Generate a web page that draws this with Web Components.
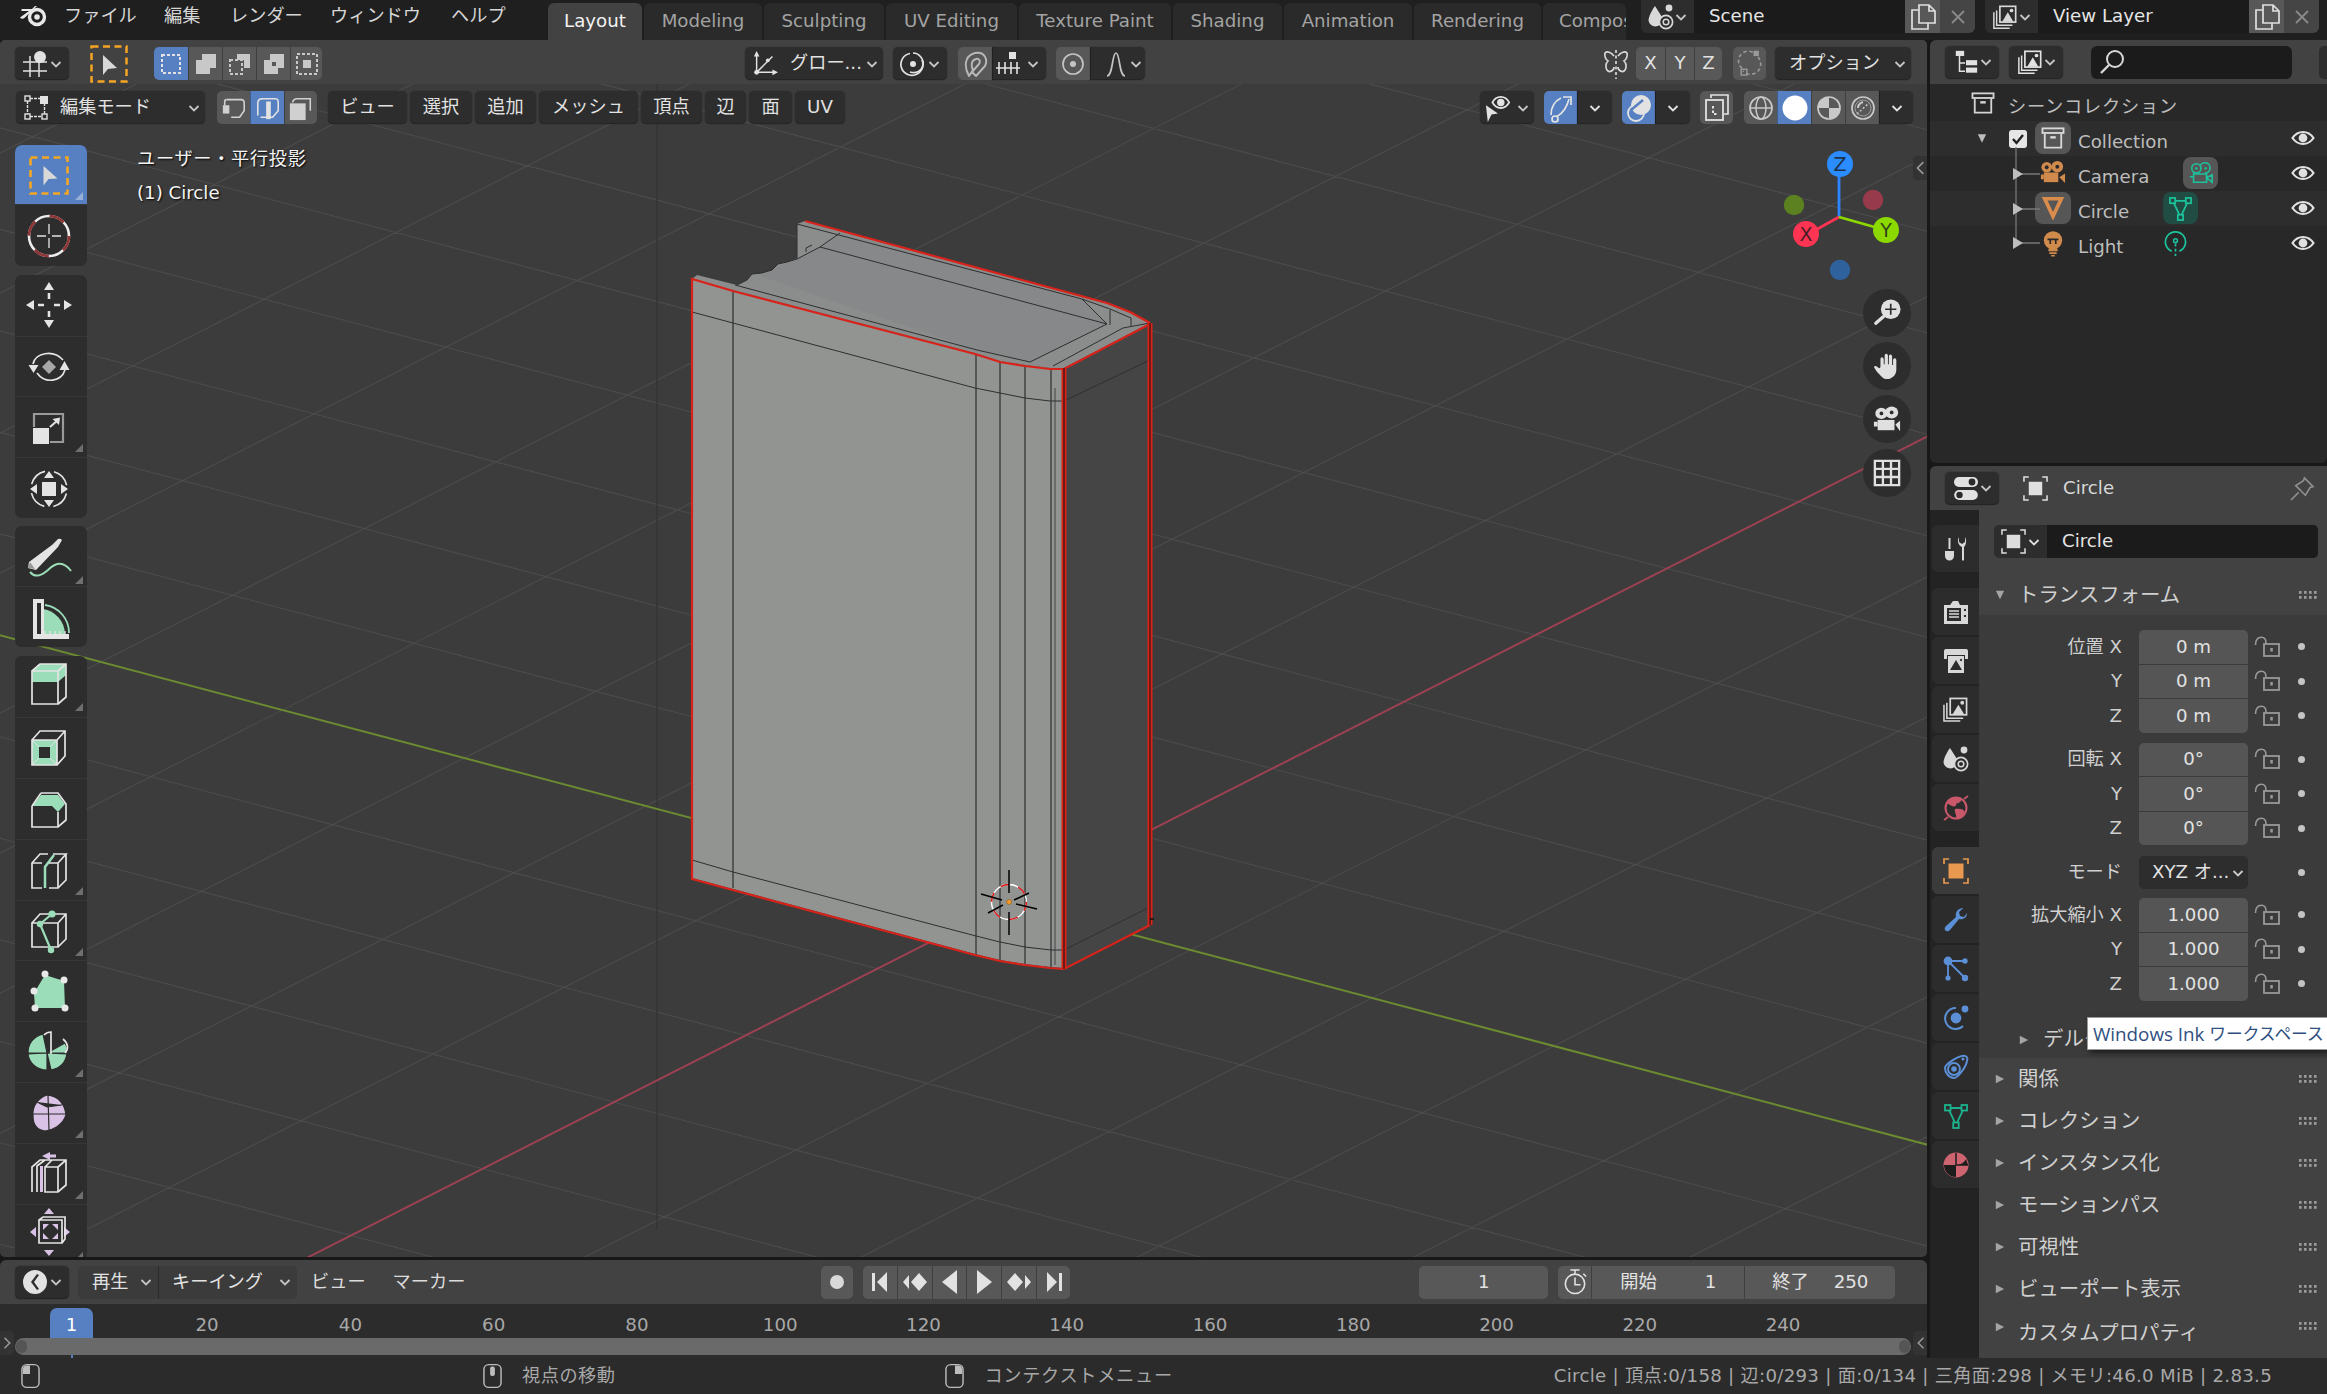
<!doctype html>
<html lang="ja"><head><meta charset="utf-8"><title>Blender</title>
<style>html,body{margin:0;width:2327px;height:1394px;background:#181818;overflow:hidden}</style>
</head><body><bl-app></bl-app>
<script>
const FONT='"DejaVu Sans","Noto Sans CJK JP",sans-serif';
const F='fill="currentColor" stroke="none"';
const D='stroke-dasharray="3 2"';
const ICONS={
chev:['0 0 12 12','<path stroke-width="1.8" d="M1.5 4 6 8.5 10.5 4"/>'],
logo:['0 0 30 28',`<circle cx="19" cy="15" r="7.5" stroke-width="3.4"/><circle cx="19" cy="15" r="2.8" ${F}/><path ${F} d="M2 15.5 11 9 H3.5 V7 H14 L17 4 19 4 13 9.5 7 15.5Q4 18 2 15.5Z"/>`],
orient:['0 0 28 28',`<path stroke-width="1.5" d="M1 12H25M1 21H25M8 6V27M17 12V27"/><circle cx="18" cy="7" r="6" ${F}/>`],
selbox:['0 0 38 38','<rect x="1.5" y="1.5" width="35" height="35" stroke="#f5a623" stroke-width="2.5" stroke-dasharray="7 4.5"/><path fill="#d8d8d8" stroke="none" d="M13 10 27 23 18 24 13 30Z"/>'],
m1:['0 0 26 26',`<rect x="4" y="4" width="18" height="18" stroke-width="2" ${D}/>`],
m2:['0 0 26 26',`<path ${F} d="M9 3H23V17H17V23H3V9H9Z"/>`],
m3:['0 0 26 26',`<path ${F} d="M10 3H23V17H17V9H10Z"/><path stroke-width="2" ${D} d="M3 9H15V23H3Z"/>`],
m4:['0 0 26 26',`<path ${F} fill-rule="evenodd" d="M9 3H23V17H17V23H3V9H9ZM11 11V15H15V11Z"/>`],
m5:['0 0 26 26',`<rect x="3" y="3" width="20" height="20" stroke-width="2" ${D}/><rect x="9" y="9" width="8" height="8" ${F}/>`],
torient:['0 0 28 28',`<path stroke-width="1.6" d="M5 4V23H25M5 23 22 6"/><path ${F} d="M5 0 8 6H2ZM28 23 22 20V26Z"/><circle cx="5" cy="23" r="2.6" ${F}/><circle cx="17" cy="10" r="2" ${F}/>`],
pivot:['0 0 26 28',`<path stroke-width="1.7" d="M10 3.500A11 11 0 1 0 22 10"/><path stroke-width="1.7" d="M13 3C19 3 24 9 23 15 22 21 16 24 10 22"/><circle cx="13" cy="14" r="3" ${F}/>`],
magnet:['0 0 26 28','<path stroke-width="1.900" stroke-linejoin="round" d="M7 26C2 17 2 6 13 3 23 1 26 10 23 16L14 26 10 22 17 14C19 11 17 8 14 9 9 10 9 16 11 20Z"/>'],
snapinc:['0 0 26 26',`<rect x="14" y="1" width="7" height="7" ${F}/><path stroke-width="1.6" d="M1 17H25M4 11V23M10 11V23M16 11V23M22 11V23"/>`],
propc:['0 0 26 26',`<circle cx="13" cy="13" r="10" stroke-width="1.7"/><circle cx="13" cy="13" r="3" ${F}/>`],
falloff:['0 0 26 26','<path stroke-width="1.7" d="M4 25C10 25 9 2 13 2S16 25 22 25"/>'],
mirror:['0 0 26 30',`<path stroke-width="1.7" d="M11 7C8 3 4 2 2 4c-1 3 1 7 3 8-2 2-3 6-1 9s7 1 7-3M15 7c3-4 7-5 9-3 1 3-1 7-3 8 2 2 3 6 1 9s-7 1-7-3"/><path stroke-width="1.7" stroke-dasharray="3 2.5" d="M13 1V30"/>`],
automerge:['0 0 30 34',`<path stroke-width="1.8" stroke-dasharray="4 3" d="M24 9A11 11 0 0 1 7 25"/><path stroke-width="1.8" stroke-dasharray="4 3" d="M6 22A11 11 0 0 1 20 5"/><rect x="19" y="2" width="6" height="6" ${F}/><rect x="5" y="23" width="6.5" height="6.5" stroke-width="1.6"/>`],
tree:['0 0 28 28',`<rect x="3" y="2" width="9" height="5.5" ${F}/><path stroke-width="1.6" d="M7 7V24H13M7 15H13"/><rect x="14" y="12" width="12" height="5.5" ${F}/><rect x="14" y="20" width="12" height="5.5" ${F}/>`],
layers:['0 0 28 26',`<path stroke-width="1.6" d="M2 8V25H19M5 6V22H22"/><rect x="8.5" y="1.5" width="17" height="17" stroke-width="1.8"/><path ${F} d="M11 18 17 8 23 18Z"/><circle cx="21" cy="6" r="2" ${F}/>`],
search:['0 0 26 26','<circle cx="16" cy="10" r="8" stroke-width="2"/><path stroke-width="2.4" d="M10 16 2 24"/>'],
coll:['0 0 26 24',`<rect x="1.5" y="1.5" width="23" height="5" stroke-width="2"/><path stroke-width="2" d="M4 7V22.5H22V7"/><rect x="10" y="10" width="6" height="2.6" ${F}/>`],
cam:['0 0 28 24',`<circle cx="8" cy="6.5" r="5.5" ${F}/><circle cx="19" cy="6" r="6" ${F}/><rect x="5" y="12" width="15" height="10" ${F}/><path ${F} d="M21 17 27 13V23ZM2 14H5V19H2Z"/><circle cx="8" cy="6.5" r="2" fill="#2a2a2a" stroke="none"/><circle cx="19" cy="6" r="2" fill="#2a2a2a" stroke="none"/>`],
camo:['0 0 28 24','<circle cx="9" cy="7" r="5" stroke-width="1.7"/><path stroke-width="1.7" d="M13 5a5.5 5.5 0 1 1 5 7M6 13H20V22H6ZM20 17 26 14V22ZM2 16H6"/><circle cx="9" cy="7" r="1" fill="currentColor"/><circle cx="19" cy="7" r="1" fill="currentColor"/>'],
tri:['0 0 26 26','<path stroke-width="4" stroke-linejoin="miter" d="M4 3H22L13 22Z"/>'],
bulb:['0 0 24 28',`<circle cx="12" cy="10" r="10" ${F}/><rect x="7" y="19" width="10" height="3" ${F}/><rect x="8" y="23" width="8" height="2" ${F}/><rect x="10" y="26" width="4" height="1.6" ${F}/><path stroke="#2a2a2a" stroke-width="1.8" d="M6 9H18M9 9V14M15 9V14"/>`],
meshd:['0 0 26 26',`<path stroke-width="1.8" d="M5 5H21L13 22Z"/><rect x="2" y="2" width="5.5" height="5.5" stroke-width="1.8" fill="var(--bgc,transparent)"/><rect x="18.5" y="2" width="5.5" height="5.5" stroke-width="1.8" fill="var(--bgc,transparent)"/><rect x="10.2" y="19.5" width="5.5" height="5.5" stroke-width="1.8" fill="var(--bgc,transparent)"/>`],
lightd:['0 0 24 28',`<path stroke-width="1.8" d="M8 22A10.5 10.5 0 1 1 16 22"/><circle cx="12" cy="11" r="2" stroke-width="1.6"/><path stroke-width="1.8" stroke-dasharray="3 2.4" d="M12 14V27"/>`],
eye:['0 0 24 18',`<path stroke-width="2.2" d="M1.5 9C7 1 17 1 22.5 9 17 17 7 17 1.5 9Z"/><circle cx="12" cy="9" r="4.4" ${F}/>`],
editor:['0 0 26 26',`<rect x="1" y="2" width="24" height="10" rx="5" ${F}/><rect x="1.2" y="15" width="23.6" height="10" rx="5" stroke-width="1.4" ${F}/><circle cx="19" cy="7" r="3.4" fill="#2b2b2b" stroke="none"/><circle cx="6.5" cy="20" r="3.2" fill="#2b2b2b" stroke="none"/>`],
obj:['0 0 26 26',`<path stroke-width="1.6" d="M1 6V1H6M20 1H25V6M25 20V25H20M6 25H1V20"/><rect x="6" y="6" width="14" height="14" ${F}/>`],
pin:['0 0 26 26',`<path stroke-width="1.7" d="M1 25 9 17M15 2 24 11 21 12 16 20 6 10 14 5Z"/>`],
tool:['0 0 26 26',`<path ${F} d="M2 15H11V20A4.5 4.5 0 0 1 2 20ZM5.5 2H7.5V13H5.5ZM19 11C15 9 14 5 16 1V6L19 8 22 6V1C24 5 23 9 21 11V24Q20 25.5 19 24Z"/>`],
render:['0 0 26 26',`<path ${F} fill-rule="evenodd" d="M1 6H7L10 2H15L17 6H25V25H1ZM4 9V22H18V9Z"/><path stroke-width="1.4" d="M6 12H16M6 15H16M6 18H16"/><circle cx="22" cy="11" r="1.7" fill="#2c2c2c"/><circle cx="22" cy="17" r="1.7" fill="#2c2c2c"/>`],
output:['0 0 26 26',`<path ${F} d="M1 3Q1 1 3 1H23Q25 1 25 3V11H22V7H4V11H1Z"/><rect x="5" y="8" width="16" height="17" ${F}/><path fill="#2c2c2c" stroke="none" d="M7 22 13 12 19 22Z"/><circle cx="18" cy="12" r="1.6" fill="#2c2c2c"/>`],
scenet:['0 0 26 26',`<path ${F} d="M7 2 14 13C12 15 11 18 11.5 21 8 24 1 22 0.5 16 1 12 4 6 7 2Z"/><circle cx="21" cy="4" r="3.4" ${F}/><circle cx="18" cy="18" r="6.6" stroke-width="1.7"/><circle cx="18" cy="18" r="2.8" stroke-width="1.5"/>`],
world:['0 0 26 26',`<circle cx="13" cy="13" r="10.5" stroke-width="2"/><path ${F} d="M5 5C8 2 15 1 18 4 19 7 15 8 13 9 14 11 11 12 9 11 7 10 5 9 4 8ZM12 14C16 13 21 14 22 17 20 21 16 24 13 23 14 20 11 17 12 14Z"/><path stroke-width="1.7" d="M1 25 5 22M25 1 21 4"/>`],
objt:['0 0 26 26',`<path stroke-width="1.7" d="M1 6V1H6M20 1H25V6M25 20V25H20M6 25H1V20"/><rect x="5.5" y="5.5" width="15" height="15" ${F}/>`],
wrench:['0 0 26 26',`<path ${F} d="M24 6C24 11 20 13 16 12L7 23C4 26 0 23 2.5 19.5L13 10C12 5 15 1 20.500 1L16 5 17 9 21 10Z"/>`],
part:['0 0 26 26',`<circle cx="5" cy="5" r="4.4" ${F}/><circle cx="22" cy="5" r="2.7" ${F}/><circle cx="5" cy="22" r="2.6" ${F}/><circle cx="22" cy="22" r="3.2" ${F}/><path stroke-width="1.8" d="M5 5H22M5 5V22M5 5 22 22"/>`],
phys:['0 0 26 26',`<path stroke-width="2" d="M20 21A10.500 10.500 0 1 1 13 3"/><circle cx="13" cy="13" r="5.4" ${F}/><circle cx="22" cy="4" r="3.4" ${F}/>`],
constr:['0 0 26 26',`<path stroke-width="2" d="M2 14C2 10 14 3 19 2 24 1 25 4 24 7 23 13 15 24 11 24 6 24 2 19 2 14Z"/><circle cx="11" cy="15" r="6" stroke-width="2"/><circle cx="11" cy="15" r="2.8" ${F}/><circle cx="20" cy="5" r="1.6" ${F}/>`],
mat:['0 0 26 26',`<circle cx="13" cy="13" r="12.500" ${F}/><path fill="#1d1d1d" stroke="none" d="M13 13H1A12 12 0 0 0 13 25Z"/><path stroke="#1d1d1d" stroke-width="1.500" d="M13 1V13H25"/><path fill="#1d1d1d" stroke="none" d="M13 13C17 13 21 11 23 7L25 13Z"/>`],
lock:['0 0 26 22',`<path stroke-width="1.6" d="M1.500 9C1.500 4 4 1.200 7.500 1.200 11 1.200 12 4 12 7"/><rect x="10" y="8" width="15" height="12" stroke-width="1.8"/><rect x="16.300" y="12" width="2.500" height="3.500" ${F}/>`],
grip:['0 0 18 9',`<g ${F}><rect x="0" y="0" width="2.600" height="2.800"/><rect x="5" y="0" width="2.600" height="2.800"/><rect x="10" y="0" width="2.600" height="2.800"/><rect x="15" y="0" width="2.600" height="2.800"/><rect x="0" y="5" width="2.600" height="2.800"/><rect x="5" y="5" width="2.600" height="2.800"/><rect x="10" y="5" width="2.600" height="2.800"/><rect x="15" y="5" width="2.600" height="2.800"/></g>`],
tdown:['0 0 12 10',`<path ${F} d="M1 0H11L6 10Z"/>`],
tright:['0 0 12 12',`<path ${F} d="M1 1 11 6 1 11Z"/>`],
tleft:['0 0 12 20',`<path stroke-width="2" d="M10 3 3 10 10 17"/>`],
tright2:['0 0 12 20',`<path stroke-width="2" d="M2 3 9 10 2 17"/>`],
emode:['0 0 26 26',`<rect x="1" y="1" width="5" height="5" stroke-width="1.4"/><rect x="16" y="1" width="8" height="8" ${F}/><rect x="1" y="19" width="5" height="5" stroke-width="1.4"/><rect x="18" y="19" width="5" height="5" stroke-width="1.4"/><path stroke-width="1.4" d="M3.500 6V19M6 21.500H18M20.500 19V9M6 3.500H16" stroke-dasharray="3 1"/>`],
vert:['0 0 28 28',`<path stroke-width="1.7" d="M6 5H22C25 5 25 7 25 9V17L20 24H11"/><rect x="2" y="11" width="7" height="9" ${F}/><path stroke-width="1.700" d="M4 11V7Q4 5 6 5"/>`],
edge:['0 0 28 28',`<path stroke-width="1.700" d="M3 22V9C3 6 5 4 8 4H22C25 4 25 6 25 9V17L19 24H6"/><rect x="12" y="7" width="5" height="19" ${F}/>`],
face:['0 0 28 28',`<path stroke-width="1.700" d="M5 8C5 6 7 4 10 4H24V17"/><rect x="2" y="9" width="17" height="18" ${F}/>`],
ovis:['0 0 28 30',`<path stroke-width="2" d="M8 9C12 1 22 1 26 9 22 17 12 17 8 9Z"/><circle cx="17" cy="9" r="4" ${F}/><path ${F} d="M1 12 14 21 7 22 3 30Z"/>`],
ogiz:['0 0 26 30',`<circle cx="7" cy="26" r="3" stroke-width="1.700"/><path stroke-width="1.700" d="M9 23.500C15 20 19 14 21 6"/><path stroke-width="1.700" d="M15 4H23V12"/><path stroke-width="1.700" d="M3 22C3 14 7 8 13 5"/>`],
oover:['0 0 26 30',`<circle cx="15" cy="12" r="10" ${F}/><circle cx="10" cy="20" r="8" stroke-width="1.800"/><path stroke="#5680c2" stroke-width="2.500" d="M5 17 17 7"/>`],
xray:['0 0 26 28',`<path stroke-width="1.700" d="M7 4V1H24V20H20"/><rect x="2" y="6" width="17" height="20" stroke-width="1.800"/><path stroke-width="2" stroke-dasharray="2.500 2" d="M9 12V20H14"/>`],
swire:['0 0 26 26',`<circle cx="13" cy="13" r="11" stroke-width="1.700"/><ellipse cx="13" cy="13" rx="5" ry="11" stroke-width="1.500"/><path stroke-width="1.500" d="M2 13H24"/>`],
ssolid:['0 0 26 26',`<circle cx="13" cy="13" r="12.500" ${F}/>`],
smat:['0 0 26 26',`<circle cx="13" cy="13" r="11" stroke-width="1.700"/><path ${F} d="M13 2A11 11 0 0 0 2 13H13ZM13 13H24A11 11 0 0 1 13 24Z"/><path stroke-width="1.500" stroke-dasharray="2.500 2" d="M14 22A8 8 0 0 0 22 15"/>`],
srend:['0 0 26 26',`<circle cx="13" cy="13" r="11" stroke-width="1.700"/><circle cx="13" cy="13" r="8" stroke-width="1" opacity=".6"/><path stroke-width="2" d="M8 13C8 10 10 8 13 7"/><path stroke-width="1.500" stroke-dasharray="2 2" d="M7 19 19 8"/>`],
tlclock:['0 0 26 26',`<path ${F} fill-rule="evenodd" d="M13 1A12 12 0 1 1 13 25 12 12 0 0 1 13 1ZM15 5 9 13 15 21 17 20 12 13 17 6Z"/>`],
jmpS:['0 0 26 26',`<path ${F} d="M5 4H8V22H5ZM20 3V23L10 13Z"/>`],
keyP:['0 0 26 26',`<path ${F} d="M1 13 7 6V20ZM17 4 25 13 17 22 9 13Z"/>`],
playB:['0 0 26 26',`<path ${F} d="M20 1V25L5 13Z"/>`],
play:['0 0 26 26',`<path ${F} d="M6 1V25L21 13Z"/>`],
keyN:['0 0 26 26',`<path ${F} d="M25 13 19 6V20ZM9 4 1 13 9 22 17 13Z"/>`],
jmpE:['0 0 26 26',`<path ${F} d="M21 4H18V22H21ZM6 3V23L16 13Z"/>`],
rec:['0 0 26 26',`<circle cx="13" cy="13" r="7" ${F}/>`],
timer:['0 0 26 30',`<circle cx="13" cy="17" r="10.500" stroke-width="1.700"/><path stroke-width="1.700" d="M8 2H18M13 2V6M22 6 25 9M13 10V18H19"/>`],
mouseL:['0 0 20 26',`<rect x="1" y="1" width="18" height="24" rx="5" stroke-width="1.500"/><path ${F} d="M2 11V6Q2 2 6 2H9.500V11Z"/>`],
mouseM:['0 0 20 26',`<rect x="1" y="1" width="18" height="24" rx="5" stroke-width="1.500"/><rect x="7.500" y="3" width="5" height="10" rx="2" ${F}/>`],
mouseR:['0 0 20 26',`<rect x="1" y="1" width="18" height="24" rx="5" stroke-width="1.500"/><path ${F} d="M18 11V6Q18 2 14 2H10.500V11Z"/>`],
nzoom:['0 0 30 30',`<circle cx="19" cy="11" r="10.500" ${F}/><path stroke="#2d2d2d" stroke-width="1.800" d="M19 5V17M13 11H25"/><path stroke-width="3.600" stroke-linecap="round" d="M11 19 3 26"/>`],
nhand:['0 0 30 30',`<path ${F} d="M7 24C4 21 2 18 1 16 2 14 4 15 6 17 7 18 8 17 8 15V8C8 5 11 5 11.500 8V13H12.500V4C12.500 1 16 1 16 4V13H17V5C17 2 20.500 2 20.500 5V14H21.500V9C21.500 6 25 6 25 9V19C25 25 20 29 15 29 11 29 9 26 7 24Z"/>`],
ncam:['0 0 30 30',`<ellipse cx="9" cy="9" rx="6.500" ry="6" ${F}/><ellipse cx="20" cy="8" rx="7" ry="6.500" ${F}/><rect x="5" y="16" width="18" height="11" ${F}/><path ${F} d="M24 21 29 17V28ZM1 18H5V23H1Z"/><circle cx="9" cy="9" r="2" fill="#2d2d2d" stroke="none"/><circle cx="20" cy="8" r="2" fill="#2d2d2d" stroke="none"/>`],
ngrid:['0 0 30 30',`<path stroke-width="2.500" d="M2 2H28V28H2ZM10.600 2V28M19.300 2V28M2 10.600H28M2 19.300H28"/>`],
};
function icon(name,w,h,extra=''){const [vb,body]=ICONS[name];
  return `<svg xmlns="http://www.w3.org/2000/svg" viewBox="${vb}" width="${w}" height="${h||w}" fill="none" stroke="currentColor" ${extra} style="display:block;flex:none">${body}</svg>`;}
class BlIcon extends HTMLElement{connectedCallback(){if(this.shadowRoot)return;
  const w=this.getAttribute('w')||26,h=this.getAttribute('h')||w;
  this.attachShadow({mode:'open'}).innerHTML=`<style>:host{display:inline-flex;flex:none;align-items:center;justify-content:center;color:${this.getAttribute('c')||'inherit'}}</style>${icon(this.getAttribute('name'),w,h)}`;}}
customElements.define('bl-icon',BlIcon);

class BlBtn extends HTMLElement{connectedCallback(){if(this.shadowRoot)return;
  const tone=this.getAttribute('tone')||'dark',r=this.getAttribute('r')||'all',w=this.getAttribute('w');
  const bg={dark:'#2d2d2d',gray:'#585858',blue:'#5680c2',none:'transparent',line:'#3b3b3b',field:'#545454'}[tone];
  const rad={all:'5px',l:'5px 0 0 5px',r:'0 5px 5px 0',m:'0'}[r];
  const ic=this.getAttribute('icon'),chev=this.hasAttribute('chev'),is=this.getAttribute('is')||26,jc=this.getAttribute('jc')||'center',col=this.getAttribute('c')||'#e2e2e2';
  this.attachShadow({mode:'open'}).innerHTML=`<style>:host{display:inline-flex;flex:none;align-items:center;justify-content:${jc};box-sizing:border-box;height:33px;${w?`width:${w}px;`:''}background:${bg};border-radius:${rad};color:${col};gap:${this.getAttribute('gap')||0}px;padding:0 ${this.getAttribute('px')||0}px;font:18.2px/1 ${FONT};white-space:nowrap;${tone==='dark'?'box-shadow:inset 0 -1px 0 #252525,0 0 0 1px rgba(0,0,0,.08);':''}${r==='m'||r==='r'?'border-left:1px solid rgba(0,0,0,.28);':''}}
  .c{color:#c4c4c4;margin-left:${this.getAttribute('cm')||2}px}</style>${ic?icon(ic,is,this.getAttribute('ih')||is):''}<slot></slot>${chev?`<span class="c">${icon('chev',12)}</span>`:''}`;}}
customElements.define('bl-btn',BlBtn);

class BlTopbar extends HTMLElement{connectedCallback(){
  const tabs=[['Layout',94,1],['Modeling',118],['Sculpting',120],['UV Editing',131],['Texture Paint',152],['Shading',109],['Animation',128],['Rendering',127],['Compositing',83]];
  const menu=[['ファイル',73],['編集',37],['レンダー',71],['ウィンドウ',94],['ヘルプ',56]];
  const newI=`<svg width="26" height="28" viewBox="0 0 26 28" fill="none" stroke="#e0e0e0" stroke-width="1.700"><path d="M9 2H19L25 8V20H9ZM19 2V8H25M9 7H2V26H18V20"/></svg>`;
  const widget=(ic,t,m)=>`<div class="w" style="margin-left:${m}px"><span class="dd">${icon(ic,26)}<span class="ch">${icon('chev',12)}</span></span><span class="f">${t}</span><span class="n">${newI}</span><span class="x"><svg width="20" height="20" viewBox="0 0 20 20" stroke="#8a8a8a" stroke-width="1.800"><path d="M4 4 16 16M16 4 4 16"/></svg></span></div>`;
  this.attachShadow({mode:'open'}).innerHTML=`<style>
  :host{display:flex;height:40px;background:#1f1f1f;color:#d6d6d6;font:18.2px/1 ${FONT};align-items:flex-start;overflow:hidden;box-sizing:border-box}
  .logo{margin:2px 0 0 18px;color:#e8e8e8;width:46px}
  .m{display:flex;height:33px;align-items:center;margin-left:0}
  .m span{display:block;white-space:nowrap}
  .tabs{display:flex;gap:2px;margin-left:41px;height:37px;margin-top:3px;width:1078px;overflow:hidden;flex:none}
  .t{flex:none;box-sizing:border-box;height:37px;background:#2a2a2a;color:#a3a3a3;border-radius:6px 6px 0 0;display:flex;justify-content:center;align-items:center;overflow:hidden;white-space:nowrap}
  .t.on{background:#424242;color:#f2f2f2}
  .t.clip{justify-content:flex-start;padding-left:16px}
  .w{display:flex;height:33px;width:334px;border-radius:0 0 6px 6px;overflow:hidden;background:#2d2d2d;flex:none}
  .dd{width:54px;display:flex;align-items:center;justify-content:center;gap:1px;color:#d8d8d8;border-right:1px solid #1c1c1c;box-sizing:border-box}
  .ch{color:#c4c4c4}
  .f{width:210px;background:#1b1b1b;color:#e6e6e6;display:flex;align-items:center;padding-left:14px;box-sizing:border-box}
  .n{width:35px;background:#585858;display:flex;align-items:center;justify-content:center}
  .x{width:35px;background:#454545;display:flex;align-items:center;justify-content:center}
  </style>
  <div class="logo">${icon('logo',30,28)}</div>
  <div class="m">${menu.map((m,i)=>`<span style="width:${m[1]}px;margin-right:${[27,29,29,27,0][i]}px">${m[0]}</span>`).join('')}</div>
  <div class="tabs">${tabs.map(t=>`<div class="t ${t[2]?'on':''} ${t[0]==='Compositing'?'clip':''}" style="width:${t[1]}px">${t[0]}</div>`).join('')}</div>
  ${widget('scenet','Scene',15)}${widget('layers','View Layer',10)}`;}}
customElements.define('bl-topbar',BlTopbar);

class BlToolbar extends HTMLElement{connectedCallback(){
  const g='#9bddb8',p='#d9c2e6',w='#e4e4e4',corner=(c='#6f6f6f')=>`<path fill="${c}" stroke="none" d="M60 55 68 55 68 47Z"/>`;
  const cube=(x,y,W,H,dx,dy)=>`<path stroke="${w}" stroke-width="1.700" fill="none" d="M${x} ${y}H${x+W}V${y+H}H${x}ZM${x} ${y}L${x+dx} ${y-dy}H${x+W+dx}V${y+H-dy}L${x+W} ${y+H}M${x+W} ${y}L${x+W+dx} ${y-dy}"/>`;
  const T=[
  {m:0,vy:0,bs:[
   ['sel',59,`<rect x="15.500" y="12.500" width="37" height="36" stroke="#f5a623" stroke-width="2.600" stroke-dasharray="7 4.500" fill="none"/><path fill="#d8d8d8" d="M28.500 21 42.500 33.500 33.500 34 28.500 40.500Z"/>`+corner('rgba(255,255,255,.38)'),1],
   ['cursor',61,`<circle cx="34" cy="31" r="20" fill="none" stroke="#ececec" stroke-width="2.600"/><circle cx="34" cy="31" r="20" fill="none" stroke="#8f3535" stroke-width="2.700" stroke-dasharray="15.700 15.700"/><path stroke="#b4b4b4" stroke-width="1.800" d="M34 19V29M34 33V43M22 31H31M37 31H46"/>`]]},
  {m:10,vy:0,bs:[
   ['move',60.500,`<g fill="${w}"><path d="M34 7 39 15H29ZM34 53 39 45H29ZM11 30 19 25V35ZM57 30 49 25V35Z"/></g><path stroke="${w}" stroke-width="2.600" d="M34 18V24M34 36V42M23 30H29M39 30H45"/>`],
   ['rotate',60.500,`<path d="M34 23 41 30 34 37 27 30Z" fill="#a8a8a8"/><path fill="none" stroke="#e4e4e4" stroke-width="1.700" d="M18 27C20 16 38 12 48 23M50 33C46 45 30 47 22 36"/><path fill="${w}" d="M13.500 28H23.500L18.500 36ZM44.500 33H54.500L49.500 24Z"/>`],
   ['scale',60.500,`<rect x="18" y="31" width="16" height="16" fill="${w}"/><path stroke="#9a9a9a" stroke-width="2.200" fill="none" d="M19 30V17H48V45H35"/><path stroke="${w}" stroke-width="2" d="M35 30 43 23"/><path fill="${w}" d="M45 20.500 37.500 22 44 28Z"/>`+corner()],
   ['xform',60.500,`<rect x="27" y="24" width="14" height="14" fill="${w}"/><circle cx="34" cy="31" r="18" fill="none" stroke="#e4e4e4" stroke-width="1.700" stroke-dasharray="19 9.270" stroke-dashoffset="-4.640"/><path fill="${w}" d="M34 13 39 20H29ZM34 49 39 42H29ZM15 31 22 26V36ZM53 31 46 26V36Z"/>`]]},
  {m:9,vy:-3,bs:[
   ['annot',60,`<path fill="${w}" d="M37 16 43 10Q45.500 9 47 11L43 18 21 41 13 39 14 33Z"/><path fill="#9a9a9a" d="M13 39 15 33 20 40Z"/><path stroke="${g}" stroke-width="2" fill="none" d="M15 43C20 49 26 47 33 41 40 34 48 31 56 42"/>`+corner()],
   ['meas',60,`<path fill="${g}" d="M28 19A26 26 0 0 1 50 44H28Z"/><path stroke="${g}" stroke-width="1.800" fill="none" d="M30 15A28 28 0 0 1 54 43"/><rect x="18" y="9" width="10" height="36" fill="#2d2d2d"/><path fill="${w}" d="M18 9H29V44H54V49H18ZM22 13V44H26V13Z"/><path stroke="${w}" stroke-width="1.300" d="M26 17H29M26 21H29M26 25H29M26 29H29M26 33H29M26 37H29M30 44V41M35 44V41M40 44V41M45 44V41M50 44V41"/>`]]},
  {m:10,vy:0,bs:[
   ['ext',60.900,`<path fill="${g}" d="M17 15H43V26H17ZM17 15 24 8H51L43 15Z"/><path fill="${g}" d="M43 15 51 8V19L43 26Z"/>`+cube(17,15,26,33,8,7)+corner()],
   ['inset',60.900,`<path fill="${g}" fill-rule="evenodd" d="M17 22H42V47H17ZM24 29V40H35V29Z"/>`+cube(17,22,25,25,8,9)+`<path stroke="${w}" stroke-width="1" d="M17 22 24 29M42 22 35 29M17 47 24 40M42 47 35 40"/>`],
   ['bevel',60.900,`<path fill="${g}" d="M17 27 26 16H43L37 27ZM43 16 50 25 43 33 37 27Z"/>`+`<path stroke="${w}" stroke-width="1.700" fill="none" d="M17 27V48H43V33M17 48H43L51 41V25L43 14H26M17 27 26 14"/>`],
   ['loop',60.900,`<path stroke="${g}" stroke-width="2.500" fill="none" d="M30 48V27L39 15"/>`+`<path stroke="${w}" stroke-width="1.700" fill="none" d="M27 48H17V23L25 14H33M34 48H43V23L51 14H38M43 23H34M27 23H17M51 14V40L43 48"/>`+corner()],
   ['knife',60.900,`<path stroke="${w}" stroke-width="1.700" fill="none" d="M17 22H43V46H17ZM17 22 25 13H51V38L43 46M43 22 51 13"/><path stroke="${g}" stroke-width="2.200" fill="none" d="M37 13 25 23 36 49"/><circle cx="37" cy="13" r="3.600" fill="${g}"/><circle cx="25" cy="23" r="3.200" fill="${g}"/><circle cx="36" cy="49" r="3.200" fill="${g}"/>`+corner()],
   ['poly',60.900,`<path fill="${g}" d="M30 14 49 20 50 47H20L19 32Z"/><g fill="#e8e8e8"><circle cx="30" cy="13" r="3.500"/><circle cx="49" cy="19" r="3.500"/><circle cx="19" cy="30" r="3.500"/><circle cx="20" cy="47" r="3.500"/><circle cx="50" cy="47" r="3.500"/></g>`],
   ['spin',60.900,`<path fill="${g}" stroke="#2d2d2d" stroke-width="1.200" d="M32 31 13 31C13 22 18 15 28 12ZM32 31 50 21C53 26 53 31 52 32ZM32 31H52C51 40 46 46 36 48ZM32 31V48C22 48 14 41 13 32Z"/><path stroke="${w}" stroke-width="1.700" fill="none" d="M29 13C32 10 36 10 36 10V32M48 17C53 21 54 27 50 31"/>`+corner()],
   ['smooth',60.900,`<path fill="${p}" stroke="#2d2d2d" stroke-width="1.200" d="M18 33C17 22 24 15 32 12 44 13 50 22 51 32 48 42 38 47 30 48 22 47 18 42 18 33ZM18 31H51M33 12 34 48M22 19 32 24 47 22"/>`+corner()],
   ['slide',60.900,`<path fill="${p}" d="M27 12 35 8V16ZM35 10.500H41V13.500H35Z"/><path fill="${p}" d="M25 22H28V48H25Z"/><path stroke="${w}" stroke-width="1.700" fill="none" d="M17 48V23L25 16H51V41L43 48H30V23H43V48M43 23 51 16M30 23 37 16M22 48V22L30 16"/>`+corner()],
   ['shrink',60.900,`<path fill="${p}" d="M34 3 39 9H29ZM34 51 39 45H29ZM15 27 21 22V32ZM55 27 49 22V32Z"/><path stroke="${w}" stroke-width="1.700" fill="none" d="M24 15H47V38H24ZM24 15 28 12H50V34L47 38"/><path fill="${p}" d="M28 19H34L28 25ZM43 19H37L43 25ZM28 34H34L28 28ZM43 34H37L43 28Z"/>`+corner()]]}
  ];
  this.attachShadow({mode:'open'}).innerHTML=`<style>:host{display:flex;flex-direction:column;width:72px;flex:none}
  .g{border-radius:7px;overflow:hidden;background:#2d2d2d;box-shadow:0 1px 0 rgba(0,0,0,.25)}
  .b{display:block;box-sizing:border-box;overflow:hidden;border-top:1px solid #373737}.b:first-child{border-top:0}.b.on{background:#5680c2;border-top:0}
  svg{display:block}</style>
  ${T.map(g=>`<div class="g" style="margin-top:${g.m}px">${g.bs.map(b=>`<div class="b ${b[3]?'on':''}" style="height:${b[1]}px"><svg width="72" height="61" viewBox="0 ${g.vy} 72 61">${b[2]}</svg></div>`).join('')}</div>`).join('')}`;}}
customElements.define('bl-toolbar',BlToolbar);

class BlScene extends HTMLElement{connectedCallback(){
  const O=[1009,902],a=[131.6,-66.7],b=[181.6,48];let gl='';
  for(let i=-25;i<=25;i++){ if(i===0)continue;const x=O[0]+i*a[0],y=O[1]+i*a[1];gl+=`M${x-b[0]*20} ${y-b[1]*20}L${x+b[0]*20} ${y+b[1]*20}`;}
  for(let j=-25;j<=25;j++){ if(j===0)continue;const x=O[0]+j*b[0],y=O[1]+j*b[1];gl+=`M${x-a[0]*20} ${y-a[1]*20}L${x+a[0]*20} ${y+a[1]*20}`;}
  const top=`692,279 733,290 975,353 1000,361 1025,365 1050,368 1064,368`;
  const bot=`1064,968 1050,967 1025,964 1000,960 975,954 692,878`;
  this.attachShadow({mode:'open'}).innerHTML=`<style>:host{display:block;position:absolute;inset:0;background:#3c3c3c;overflow:hidden}svg{display:block}text{font:19px ${FONT}}</style>
  <svg width="1927" height="1217" viewBox="0 40 1927 1217" xmlns="http://www.w3.org/2000/svg">
   <path d="${gl}" stroke="#4c4c4c" stroke-width="1.100" fill="none"/>
   <path d="M657 84V1230" stroke="#333" stroke-width="1.200"/>
   <path d="M${O[0]-a[0]*20} ${O[1]-a[1]*20}L${O[0]+a[0]*20} ${O[1]+a[1]*20}" stroke="#9c4152" stroke-width="2"/>
   <path d="M${O[0]-b[0]*20} ${O[1]-b[1]*20}L${O[0]+b[0]*20} ${O[1]+b[1]*20}" stroke="#6c8b31" stroke-width="2"/>
   <polygon fill="#8b8d8c" points="692,279 697,275 737,285 747,280 752,274 762,273 772,270 778,264 787,262 797,259 797,224 805,221 1107,303 1130,312 1150,323 1064,368 1050,368 1025,365 1000,361 975,353 733,290"/>
   <polygon fill="#868889" points="760,276 820,247 840,233 1082,299 1107,324 1030,362 977,350"/>
   <polygon fill="#929492" points="${top} ${bot}"/>
   <polygon fill="#454545" points="1064,368 1150,324 1150,924 1064,968"/>
   <g fill="none" stroke="#2e2f2f" stroke-width="1.200">
    <path d="M733 290V888M976 354V955M1000 361V960M1025 365V964M1051 368V967"/>
    <path stroke="#5a5a5a" stroke-width="1.400" d="M1055 388V965"/>
    <path stroke-width="1" d="M692 312 733 323 975 388 1000 393 1025 398 1050 401 1064 401 1150 360"/>
    <path stroke-width="1" d="M692 860 733 872 976 936 1000 942 1025 947 1051 950 1064 950 1150 907"/>
    <path stroke-width="1" d="M797 224 1082 299 1107 324 820 247 840 233M735 285 977 350 1030 362 1107 324M797 259V224M1123 328 1053 366M1123 328 1150 323M1110 310V325M1131 318V326M1082 299 1110 309 1131 318"/>
    <path stroke-width="1" d="M737 285 747 280 752 274 762 273 772 270 778 264 787 262 797 259 820 247M806 252V248L812 245"/>
   </g>
   <g fill="none" stroke="#d9231a">
    <polyline stroke-width="2.200" points="692,880 692,279 733,291 975,354 1000,362 1025,366 1050,369 1064,369 1150,324"/>
    <polyline stroke-width="2.200" points="692,879 975,955 1000,961 1025,965 1050,968 1064,969 1150,925"/>
    <polyline stroke-width="2.200" points="805,221 1107,303 1130,312 1150,323"/>
    <path stroke-width="5" d="M1064 368V969M1150 323V925"/>
    <path stroke="#3a1510" stroke-width="1.300" d="M1064 368V969M1150 323V925"/>
   </g>
   <path d="M1150 919h4" stroke="#111" stroke-width="1.500"/>
   <circle cx="1009" cy="902" r="17.500" fill="none" stroke="#fff" stroke-width="1.400"/>
   <circle cx="1009" cy="902" r="17.500" fill="none" stroke="#e01010" stroke-width="1.400" stroke-dasharray="9.160 9.160"/>
   <path stroke="#000" stroke-width="1.500" d="M1009 870V893M1009 912V935M981 894 1002 900M1016 904 1037 909M1029 893 1014 900M988 913 1003 905"/>
   <circle cx="1009" cy="902" r="2.500" fill="#f09a2b" stroke="#8a5a1a" stroke-width=".6"/>
   <circle cx="1873" cy="200" r="10.200" fill="#973b4c"/><circle cx="1794" cy="205" r="10.200" fill="#5c8121"/><circle cx="1840" cy="270" r="10.200" fill="#2f619c"/>
   <path d="M1839 217V170" stroke="#2b86ff" stroke-width="2.800"/><path d="M1839 217 1812 232" stroke="#ff3352" stroke-width="2.800"/><path d="M1839 217 1878 228" stroke="#8cd900" stroke-width="2.800"/>
   <circle cx="1840" cy="164" r="13" fill="#2b8cff"/><circle cx="1806" cy="234" r="13" fill="#ff3352"/><circle cx="1886" cy="230" r="13" fill="#8cd900"/>
   <g text-anchor="middle" style="fill:#1a1a1a;opacity:.8"><text x="1840" y="171">Z</text><text x="1806" y="241">X</text><text x="1886" y="237">Y</text></g>
  </svg>`;}}
customElements.define('bl-scene',BlScene);

class BlViewport extends HTMLElement{connectedCallback(){
  const M=[['ビュー',79],['選択',62],['追加',61],['メッシュ',99],['頂点',61],['辺',41],['面',43],['UV',50]];
  const nav=['nzoom','nhand','ncam','ngrid'];
  const navY=[313,366,419,473];
  this.attachShadow({mode:'open'}).innerHTML=`<style>
  :host{display:block;position:relative;height:1217px;overflow:hidden;border-radius:5px 5px 5px 5px;color:#e6e6e6;font:18.2px/1 ${FONT}}
  .content{position:relative}
  .tool{height:44px;background:#424242;display:flex;align-items:center;padding:3px 0 0 15px;box-sizing:border-box}
  .hdr{height:33px;margin-top:7px;display:flex;padding-left:16px}
  .body{display:flex;margin:21px 0 0 15px}
  .info{margin:3px 0 0 50px;color:#f4f4f4;text-shadow:1px 1px 2px #000;white-space:nowrap}
  .info div{height:34px;line-height:22px}
  .cjk{letter-spacing:.7px}
  .group{display:flex;flex:none}
  .nav{position:absolute;left:1863px;width:48px;height:48px;border-radius:50%;background:#2d2d2d;color:#e0e0e0;display:flex;align-items:center;justify-content:center}
  .cl{position:absolute;left:1913px;top:116px;width:14px;height:24px;background:#333;border-radius:4px 0 0 4px;color:#9a9a9a;display:flex;align-items:center;justify-content:center}
  </style>
  <bl-scene></bl-scene>
  <div class="content">
  <div class="tool">
    <bl-btn w="54" icon="orient" is="28" chev cm="0"></bl-btn>
    <span style="margin-left:21px;flex:none">${icon('selbox',38)}</span>
    <span class="group" style="margin-left:26px">
      <bl-btn tone="blue" r="l" w="34" icon="m1"></bl-btn><bl-btn tone="gray" r="m" w="34" icon="m2" c="#c8c8c8"></bl-btn><bl-btn tone="gray" r="m" w="34" icon="m3" c="#c8c8c8"></bl-btn><bl-btn tone="gray" r="m" w="34" icon="m4" c="#c8c8c8"></bl-btn><bl-btn tone="gray" r="r" w="32" icon="m5" c="#c8c8c8"></bl-btn>
    </span>
    <bl-btn style="margin-left:423px" w="138" icon="torient" is="26" chev jc="flex-start" px="7" gap="12" cm="-8">グロー...</bl-btn>
    <bl-btn style="margin-left:10px" w="54" icon="pivot" ih="28" chev></bl-btn>
    <span class="group" style="margin-left:11px">
      <bl-btn tone="gray" r="l" w="34" icon="magnet" ih="28" c="#b8b8b8"></bl-btn><bl-btn r="r" w="54" icon="snapinc" jc="flex-start" px="2" chev cm="6"></bl-btn>
    </span>
    <span class="group" style="margin-left:10px">
      <bl-btn tone="gray" r="l" w="34" icon="propc" c="#c4c4c4"></bl-btn><bl-btn r="r" w="55" icon="falloff" jc="flex-start" px="12" chev cm="1" c="#c4c4c4"></bl-btn>
    </span>
    <span style="margin-left:458px;flex:none;color:#d8d8d8">${icon('mirror',26,30)}</span>
    <span class="group" style="margin-left:7px">
      <bl-btn tone="gray" r="l" w="29">X</bl-btn><bl-btn tone="gray" r="m" w="29">Y</bl-btn><bl-btn tone="gray" r="r" w="28">Z</bl-btn>
    </span>
    <bl-btn style="margin-left:11px" tone="gray" w="33" icon="automerge" is="28" ih="30" c="#9a9a9a"></bl-btn>
    <bl-btn style="margin-left:9px" w="136" chev jc="flex-start" px="14" cm="14">オプション</bl-btn>
  </div>
  <div class="hdr">
    <bl-btn w="189" icon="emode" is="26" chev jc="flex-start" px="8" gap="10" cm="27">編集モード</bl-btn>
    <span class="group" style="margin-left:12px">
      <bl-btn tone="gray" r="l" w="33" icon="vert" c="#d0d0d0"></bl-btn><bl-btn tone="blue" r="m" w="34" icon="edge"></bl-btn><bl-btn tone="gray" r="r" w="33" icon="face" c="#d0d0d0"></bl-btn>
    </span>
    ${M.map((m,i)=>`<bl-btn style="margin-left:${i?3:11}px" w="${m[1]}">${m[0]}</bl-btn>`).join('')}
    <bl-btn style="margin-left:635px" w="54" icon="ovis" is="26" ih="28" chev gap="2" cm="4"></bl-btn>
    <span class="group" style="margin-left:10px"><bl-btn tone="blue" r="l" w="33" icon="ogiz" ih="30"></bl-btn><bl-btn r="r" w="35" icon="chev" is="12"></bl-btn></span>
    <span class="group" style="margin-left:10px"><bl-btn tone="blue" r="l" w="33" icon="oover" ih="30"></bl-btn><bl-btn r="r" w="35" icon="chev" is="12"></bl-btn></span>
    <bl-btn style="margin-left:10px" tone="gray" w="33" icon="xray" ih="28"></bl-btn>
    <span class="group" style="margin-left:11px">
      <bl-btn tone="gray" r="l" w="33" icon="swire" c="#c8c8c8"></bl-btn><bl-btn tone="blue" r="m" w="34" icon="ssolid" c="#fff"></bl-btn><bl-btn tone="gray" r="m" w="34" icon="smat" c="#c8c8c8"></bl-btn><bl-btn tone="gray" r="m" w="34" icon="srend" c="#c8c8c8"></bl-btn><bl-btn r="r" w="34" icon="chev" is="12"></bl-btn>
    </span>
  </div>
  <div class="body"><bl-toolbar></bl-toolbar><div class="info"><div class="cjk">ユーザー・平行投影</div><div>(1) Circle</div></div></div>
  </div>
  ${nav.map((n,i)=>`<div class="nav" style="top:${navY[i]-24-40}px">${icon(n,28)}</div>`).join('')}
  <div class="cl">${icon('tleft',10,18)}</div>`;}}
customElements.define('bl-viewport',BlViewport);

class BlTimeline extends HTMLElement{connectedCallback(){
  const nums=[];for(let n=20;n<=240;n+=20)nums.push(n);
  this.attachShadow({mode:'open'}).innerHTML=`<style>
  :host{display:block;height:98px;margin-top:3px;border-radius:6px 6px 0 0;overflow:hidden;position:relative;font:18.2px/1 ${FONT};color:#dcdcdc}
  .h{height:44px;background:#424242;display:flex;align-items:center;padding-left:15px;box-sizing:border-box}
  .group{display:flex;flex:none}
  .r{height:54px;background:#2c2c2c;position:relative}
  .nums{display:flex;padding:9px 0 0 135.500px;height:34px;box-sizing:border-box;align-items:center;color:#a8a8a8}
  .nums span{width:143.270px;text-align:center;flex:none}
  .cur{position:absolute;left:50px;top:4px;width:43px;height:30px;padding-top:4px;box-sizing:border-box;background:#5680c2;border-radius:7px 7px 0 0;color:#fff;display:flex;align-items:center;justify-content:center}
  .sb{position:absolute;left:15px;width:1896px;top:34px;height:17px;background:#6a6a6a;border-radius:9px}
  .sb i{position:absolute;top:2px;width:11px;height:13px;border-radius:6px;background:#555}
  .arr{position:absolute;top:27px;width:14px;height:24px;background:#333;color:#9a9a9a;display:flex;align-items:center;justify-content:center}
  .tick{position:absolute;left:71px;top:51px;width:1.500px;height:3px;background:#5680c2}
  </style>
  <div class="h">
    <bl-btn w="54" icon="tlclock" chev cm="2"></bl-btn>
    <span class="group" style="margin-left:9px">
      <bl-btn tone="line" r="l" w="80" chev jc="flex-start" px="14" cm="12">再生</bl-btn><bl-btn tone="line" r="r" w="139" chev jc="flex-start" px="13" cm="16">キーイング</bl-btn>
    </span>
    <span style="margin-left:14px;flex:none">ビュー</span>
    <span style="margin-left:27px;flex:none">マーカー</span>
    <bl-btn style="margin-left:356px" tone="gray" w="32" icon="rec" c="#d8d8d8"></bl-btn>
    <span class="group" style="margin-left:10px">
      <bl-btn tone="gray" r="l" w="34" icon="jmpS"></bl-btn><bl-btn tone="gray" r="m" w="35" icon="keyP"></bl-btn><bl-btn tone="gray" r="m" w="34" icon="playB"></bl-btn><bl-btn tone="gray" r="m" w="35" icon="play"></bl-btn><bl-btn tone="gray" r="m" w="35" icon="keyN"></bl-btn><bl-btn tone="gray" r="r" w="34" icon="jmpE"></bl-btn>
    </span>
    <bl-btn style="margin-left:349px" tone="gray" w="129">1</bl-btn>
    <span class="group" style="margin-left:10px">
      <bl-btn tone="gray" r="l" w="33" icon="timer" is="24" ih="28"></bl-btn>
      <bl-btn tone="gray" r="m" w="153" jc="space-between" px="28"><span>開始</span><span>1</span></bl-btn>
      <bl-btn tone="gray" r="r" w="151" jc="space-between" px="27"><span>終了</span><span>250</span></bl-btn>
    </span>
  </div>
  <div class="r">
    <div class="nums">${nums.map(n=>`<span>${n}</span>`).join('')}</div>
    <div class="cur">1</div>
    <div class="sb"><i style="left:1px"></i><i style="right:1px"></i></div>
    <div class="arr" style="left:0;border-radius:0 4px 4px 0">${icon('tright2',9,16)}</div>
    <div class="arr" style="right:0;border-radius:4px 0 0 4px">${icon('tleft',9,16)}</div>
    <div class="tick"></div>
  </div>`;
  }}
customElements.define('bl-timeline',BlTimeline);

class BlStatus extends HTMLElement{connectedCallback(){
  this.attachShadow({mode:'open'}).innerHTML=`<style>
  :host{display:flex;height:36px;background:#2b2b2b;color:#a8a8a8;font:18.2px/1 ${FONT};align-items:center;white-space:nowrap}
  .s{margin-left:auto;margin-right:55px;letter-spacing:.27px}
  span{display:block;flex:none}
  </style>
  <span style="margin-left:21px;color:#bdbdbd">${icon('mouseL',19,26)}</span>
  <span style="margin-left:443px;color:#bdbdbd">${icon('mouseM',19,26)}</span><span style="margin-left:20px;letter-spacing:.5px">視点の移動</span>
  <span style="margin-left:330px;color:#bdbdbd">${icon('mouseR',19,26)}</span><span style="margin-left:20px;letter-spacing:.7px">コンテクストメニュー</span>
  <span class="s">Circle | 頂点:0/158 | 辺:0/293 | 面:0/134 | 三角面:298 | メモリ:46.0 MiB | 2.83.5</span>`;}}
customElements.define('bl-status',BlStatus);

class BlOutliner extends HTMLElement{connectedCallback(){
  const eye=`<span class="eye">${icon('eye',24,18)}</span>`;
  this.attachShadow({mode:'open'}).innerHTML=`<style>
  :host{display:block;position:relative;height:423px;background:#282828;border-radius:6px 0 6px 6px;overflow:hidden;color:#bdbdbd;font:18.2px/1 ${FONT}}
  .h{height:44px;background:#424242;display:flex;align-items:center;padding-left:15px;box-sizing:border-box;margin-bottom:2px}
  .se{margin-left:28px;width:201px;height:33px;background:#1b1b1b;border-radius:6px;display:flex;align-items:center;padding-left:8px;box-sizing:border-box;color:#d8d8d8;flex:none}
  .fb{margin-left:27px;width:60px;height:33px;background:#2d2d2d;border-radius:5px;flex:none}
  .row{height:35px;display:flex;align-items:center;position:relative;white-space:nowrap}
  .row.alt{background:#2d2d2d}
  .row .ic{position:absolute;display:flex;align-items:center;justify-content:center}
  .lab{position:absolute;left:148px;margin-top:7px}
  .eye{position:absolute;left:361px;top:8px;color:#e0e0e0}
  .bg{background:#565656;border-radius:8px;width:36px;height:32px}
  .chip{position:absolute;width:35px;height:32px;border-radius:8px;display:flex;align-items:center;justify-content:center;color:#1cc29b;top:1px}
  .tree{position:absolute;left:84px;top:107px;pointer-events:none;overflow:visible}
  </style>
  <div class="h">
    <bl-btn w="54" icon="tree" chev cm="1" is="26"></bl-btn>
    <bl-btn style="margin-left:10px" w="54" icon="layers" is="26" chev cm="1"></bl-btn>
    <span class="se">${icon('search',26)}</span>
    <span class="fb"></span>
  </div>
  <div class="row"><span class="ic" style="left:41px;top:6px;color:#d4d4d4">${icon('coll',24,22)}</span><span class="lab" style="left:78px;letter-spacing:.8px">シーンコレクション</span></div>
  <div class="row alt"><span class="ic" style="left:47px;top:13px;color:#bdbdbd">${icon('tdown',10,9)}</span>
    <span class="ic" style="left:79px;top:9px;width:18px;height:18px;background:#e6e6e6;border-radius:3px;color:#222"><svg width="14" height="14" viewBox="0 0 14 14" fill="none" stroke="currentColor" stroke-width="2.400"><path d="M2 7 5.500 11 12 3"/></svg></span>
    <span class="ic bg" style="left:105px;top:1px;color:#d8d8d8">${icon('coll',24,22)}</span>
    <span class="lab">Collection</span>${eye}</div>
  <div class="row"><span class="ic" style="left:109px;top:4px;color:#d08a4b">${icon('cam',27,25)}</span><span class="lab">Camera</span>
    <span class="chip" style="left:253px;background:#565656">${icon('camo',26,24)}</span>${eye}</div>
  <div class="row alt"><span class="ic bg" style="left:105px;top:1px;color:#d98c4c">${icon('tri',24,24)}</span><span class="lab">Circle</span>
    <span class="chip" style="left:233px;background:#214c43;--bgc:#214c43">${icon('meshd',25,25)}</span>${eye}</div>
  <div class="row"><span class="ic" style="left:112px;top:5px;color:#d08a4b">${icon('bulb',22,26)}</span><span class="lab">Light</span>
    <span class="chip" style="left:233px;width:24px;color:#1cc29b">${icon('lightd',23,27)}</span>${eye}</div>
  <svg class="tree" width="36" height="100" viewBox="0 0 36 100"><path d="M2 0V96M2 27H26M2 62H26M2 96H26" stroke="#777" stroke-width="1.300" fill="none"/><g fill="#bdbdbd"><path d="M-1 21 9 27-1 33Z"/><path d="M-1 56 9 62-1 68Z"/><path d="M-1 90 9 96-1 102Z"/></g></svg>`;
  }}
customElements.define('bl-outliner',BlOutliner);

class BlProp extends HTMLElement{connectedCallback(){
  const a=k=>this.getAttribute(k),pos=a('pos')||'m';
  const rad=pos==='f'?'5px 5px 0 0':pos==='l'?'0 0 5px 5px':'0';
  const dropdown=a('kind')==='menu';
  this.attachShadow({mode:'open'}).innerHTML=`<style>
  :host{display:flex;align-items:center;height:${dropdown?33:33.500}px;margin-bottom:1px;font:18.2px/1 ${FONT};color:#cfcfcf;white-space:nowrap}
  .l{width:143px;text-align:right;flex:none}
  .f{margin-left:17px;width:109px;height:100%;background:${dropdown?'#2d2d2d':'#555'};border-radius:${dropdown?'5px':rad};display:flex;align-items:center;justify-content:${dropdown?'flex-start':'center'};color:#e2e2e2;flex:none;${dropdown?'padding-left:13px;box-sizing:border-box;gap:3px;overflow:hidden':''}}
  .lk{margin-left:6px;color:#9a9a9a;width:24px;flex:none}
  .d{width:7px;height:7px;border-radius:50%;background:#c4c4c4;margin-left:${dropdown?50:20}px;flex:none}
  </style>
  <span class="l">${a('label')}</span><span class="f"><span>${a('val')}</span>${dropdown?`<span style="color:#ccc">${icon('chev',12)}</span>`:''}</span>${dropdown?'':`<span class="lk">${icon('lock',26,22)}</span>`}<span class="d"></span>`;}}
customElements.define('bl-prop',BlProp);

class BlPanelHead extends HTMLElement{connectedCallback(){
  this.attachShadow({mode:'open'}).innerHTML=`<style>
  :host{display:flex;align-items:center;height:42px;background:#424242;font:20.4px/1 ${FONT};color:#d0d0d0;padding-left:16px;white-space:nowrap}
  .a{color:#a4a4a4;width:10px;flex:none}
  .t{margin-left:13px;margin-top:1px}
  .g{margin-left:auto;margin-right:10px;color:#9a9a9a}</style>
  <span class="a">${icon(this.hasAttribute('open')?'tdown':'tright',10,10)}</span><span class="t"><slot></slot></span><span class="g">${icon('grip',18,9)}</span>`;}}
customElements.define('bl-panel-head',BlPanelHead);

class BlProperties extends HTMLElement{connectedCallback(){
  const tabs=[['tool','#d8d8d8',525],['render','#d8d8d8',588],['output','#d8d8d8',637],['layers','#d8d8d8',686],['scenet','#d8d8d8',735],['world','#c8586a',784],['objt','#e8994f',847,1],['wrench','#5b8fd6',896],['part','#5b8fd6',945],['phys','#5b8fd6',994],['constr','#5b8fd6',1043],['meshd','#1cb38e',1092],['mat','#cf6471',1141]];
  let prev=525;
  const P=(label,val,pos)=>`<bl-prop label="${label}" val="${val}" pos="${pos}"></bl-prop>`;
  this.attachShadow({mode:'open'}).innerHTML=`<style>
  :host{display:block;position:relative;height:892px;margin-top:3px;background:#232323;border-radius:6px 0 0 0;overflow:hidden;font:18.2px/1 ${FONT};color:#d8d8d8}
  .h{height:44px;background:#424242;display:flex;align-items:center;padding-left:15px;box-sizing:border-box;position:relative}
  .main{display:flex}
  .tabs{width:49px;padding:15px 0 0 2px;box-sizing:border-box;flex:none;height:848px}
  .tb{width:47px;height:47px;background:#2c2c2c;border-radius:6px 0 0 6px;display:flex;align-items:center;justify-content:center;position:relative}
  .tb.on{background:#3b3b3b}
  .c{flex:1;min-width:0}
  .top{height:65px;background:#424242;padding:15px 9px 0 15px;box-sizing:border-box}
  .nm{display:flex;height:33px;border-radius:5px;overflow:hidden;background:#2d2d2d}
  .nm .dd{width:54px;flex:none;display:flex;align-items:center;justify-content:center;color:#ddd;gap:2px;border-right:1px solid #1b1b1b;box-sizing:border-box}
  .nm .v{flex:1;background:#1b1b1b;display:flex;align-items:center;padding-left:14px;color:#e4e4e4}
  .body{background:#3b3b3b;padding:15px 0 0;height:443px;box-sizing:border-box;position:relative}
  .grp{margin-bottom:10px}
  .sub{display:flex;align-items:center;height:36px;margin-top:21px;padding-left:40px;color:#cfcfcf;white-space:nowrap;font-size:20.4px}
  .sub .a{width:10px;margin-right:14px;color:#a4a4a4;flex:none}
  </style>
  <div class="h">
    <bl-btn w="54" icon="editor" chev cm="1"></bl-btn>
    <span style="margin-left:24px;color:#e0e0e0">${icon('obj',25,25)}</span>
    <span style="margin-left:15px">Circle</span>
    <span style="margin-left:auto;margin-right:12px;color:#8f8f8f">${icon('pin',25,25)}</span>
  </div>
  <div class="main">
    <div class="tabs">${tabs.map((t,i)=>{const m=t[2]-prev-(i?47:0);prev=t[2];return `<div class="tb ${t[3]?'on':''}" style="margin-top:${i?m:0}px;color:${t[1]};--bgc:#2c2c2c">${icon(t[0],t[0]==='layers'?27:26,t[0]==='layers'?25:26)}</div>`}).join('')}</div>
    <div class="c">
      <div class="top"><div class="nm"><span class="dd">${icon('obj',25,25)}${icon('chev',12)}</span><span class="v">Circle</span></div></div>
      <bl-panel-head open style="height:40px">トランスフォーム</bl-panel-head>
      <div class="body">
        <div class="grp">${P('位置 X','0 m','f')}${P('Y','0 m','m')}${P('Z','0 m','l')}</div>
        <div class="grp" style="margin-bottom:11px">${P('回転 X','0°','f')}${P('Y','0°','m')}${P('Z','0°','l')}</div>
        <div class="grp" style="margin-bottom:9px"><bl-prop label="モード" val="XYZ オ..." kind="menu"></bl-prop></div>
        <div class="grp" style="margin-bottom:0">${P('拡大縮小 X','1.000','f')}${P('Y','1.000','m')}${P('Z','1.000','l')}</div>
        <div class="sub"><span class="a">${icon('tright',10,10)}</span>デルタ トランスフォーム</div>
      </div>
      <bl-panel-head>関係</bl-panel-head>
      <bl-panel-head>コレクション</bl-panel-head>
      <bl-panel-head>インスタンス化</bl-panel-head>
      <bl-panel-head>モーションパス</bl-panel-head>
      <bl-panel-head>可視性</bl-panel-head>
      <bl-panel-head>ビューポート表示</bl-panel-head>
      <bl-panel-head style="height:68px;align-items:flex-start;padding-top:12px;box-sizing:border-box">カスタムプロパティ</bl-panel-head>
    </div>
  </div>`;}}
customElements.define('bl-properties',BlProperties);

class BlTooltip extends HTMLElement{connectedCallback(){
  this.attachShadow({mode:'open'}).innerHTML=`<style>
  :host{position:absolute;left:2087px;top:1017px;width:240px;height:33px;box-sizing:border-box;background:#fff;border:1px solid #9a9a9a;border-right:0;box-shadow:3px 3px 5px rgba(0,0,0,.5);color:#2f4f7f;font:18.8px/1 "Open Sans","Noto Sans CJK JP",sans-serif;display:flex;align-items:center;padding:1px 0 0 5px;white-space:nowrap;overflow:hidden}
  b{font-weight:400;font-size:16.700px;margin-left:0}</style>Windows Ink&nbsp;<b>ワークスペース</b>`;}}
customElements.define('bl-tooltip',BlTooltip);

class BlApp extends HTMLElement{connectedCallback(){
  this.attachShadow({mode:'open'}).innerHTML=`<style>
  :host{display:block;position:relative;width:2327px;height:1394px;background:#181818;overflow:hidden}
  .main{display:flex;height:1318px}
  .left{width:1927px;flex:none}
  .right{flex:1;margin-left:3px;min-width:0}
  </style>
  <bl-topbar></bl-topbar>
  <div class="main">
    <div class="left"><bl-viewport></bl-viewport><bl-timeline></bl-timeline></div>
    <div class="right"><bl-outliner></bl-outliner><bl-properties></bl-properties></div>
  </div>
  <bl-status></bl-status>
  <bl-tooltip></bl-tooltip>`;}}
customElements.define('bl-app',BlApp);
</script></body></html>
